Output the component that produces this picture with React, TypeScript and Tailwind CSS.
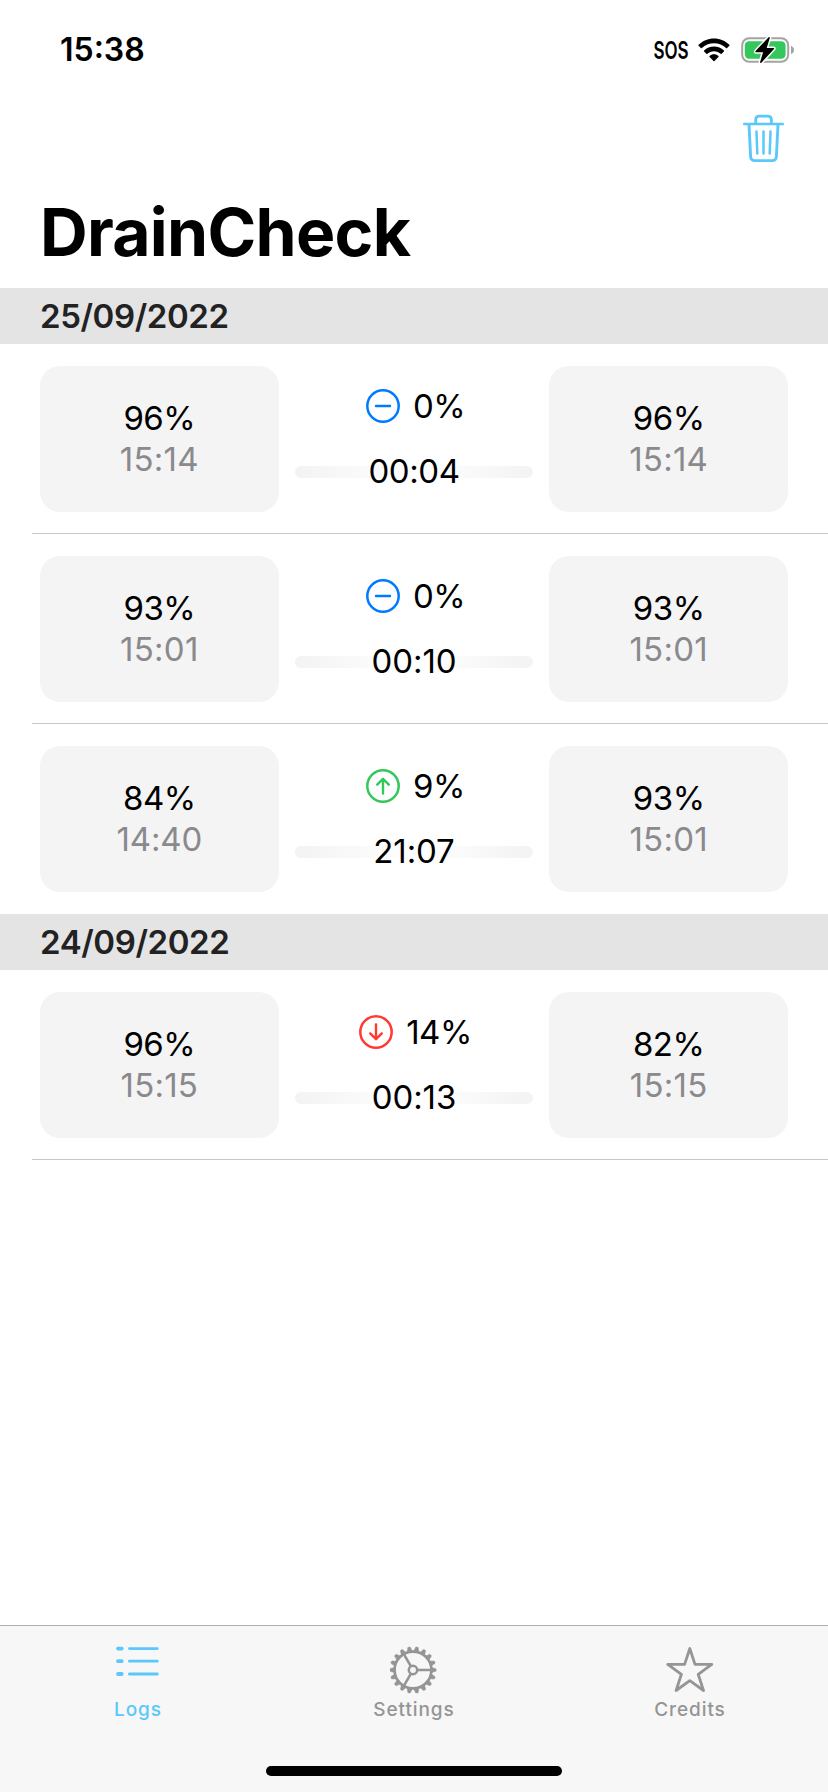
import type { ReactNode } from "react";

type Trend = "same" | "up" | "down";

interface Log {
  from: [string, string];
  to: [string, string];
  trend: Trend;
  delta: string;
  duration: string;
}

const sections: { date: string; logs: Log[] }[] = [
  {
    date: "25/09/2022",
    logs: [
      { from: ["96%", "15:14"], to: ["96%", "15:14"], trend: "same", delta: "0%", duration: "00:04" },
      { from: ["93%", "15:01"], to: ["93%", "15:01"], trend: "same", delta: "0%", duration: "00:10" },
      { from: ["84%", "14:40"], to: ["93%", "15:01"], trend: "up", delta: "9%", duration: "21:07" },
    ],
  },
  {
    date: "24/09/2022",
    logs: [{ from: ["96%", "15:15"], to: ["82%", "15:15"], trend: "down", delta: "14%", duration: "00:13" }],
  },
];

const trendColor: Record<Trend, string> = {
  same: "text-[#007aff]",
  up: "text-[#34c759]",
  down: "text-[#ff3b30]",
};

const trendPath: Record<Trend, string> = {
  same: "M10 17H24",
  up: "M17 24.5V10.2M11.2 15.6L17 9.8L22.8 15.6",
  down: "M17 9.5V23.8M11.2 18.4L17 24.2L22.8 18.4",
};

function TrendIcon({ trend }: { trend: Trend }) {
  return (
    <svg viewBox="0 0 34 34" className={`size-[34px] ${trendColor[trend]}`} fill="none" stroke="currentColor" strokeLinecap="round" strokeLinejoin="round">
      <circle cx="17" cy="17" r="15.7" strokeWidth="2.5" />
      <path d={trendPath[trend]} strokeWidth="2.4" />
    </svg>
  );
}

// The narrow "1" needs looser tracking so that times keep an even width.
const timeTracking = ["tracking-[-0.45px]", "tracking-[-0.1px]", "tracking-[0.25px]"];

function Time({ value, muted = false }: { value: string; muted?: boolean }) {
  const ones = Math.min(value.split("1").length - 1, 2);
  return <span className={`${timeTracking[ones]} ${muted ? "text-[#8a8a8e]" : ""}`}>{value}</span>;
}

function Reading({ value }: { value: [string, string] }) {
  return (
    <div className="flex h-[146px] flex-col items-center justify-center rounded-[20px] bg-[#f4f4f4] leading-[41px]">
      <span>{value[0]}</span>
      <Time value={value[1]} muted />
    </div>
  );
}

function LogRow({ log, divider }: { log: Log; divider: boolean }) {
  return (
    <div className="flex h-[190px] flex-col">
      <div className="grid grid-cols-3 gap-4 px-10 pt-[22px] text-[33px] tracking-[-0.5px]">
        <Reading value={log.from} />
        <div className="flex h-[146px] flex-col pt-5">
          <div className="flex h-10 items-center justify-center gap-[13px] pl-[3px]">
            <TrendIcon trend={log.trend} />
            <span className="pt-px">{log.delta}</span>
          </div>
          <div className="mt-10 flex h-3 items-center justify-center rounded-full bg-linear-to-r from-[#f3f3f3] via-white to-[#f3f3f3]">
            <Time value={log.duration} />
          </div>
        </div>
        <Reading value={log.to} />
      </div>
      {divider && <div className="mt-auto ml-8 h-px bg-[#c6c6c8]" />}
    </div>
  );
}

function StatusBar() {
  return (
    <header className="flex h-[100px] items-center justify-between pr-[33px] pl-[60px]">
      <span className="text-[32px] font-semibold">15:38</span>
      <div className="flex items-center">
        <span className="mr-[9px] origin-right scale-x-[0.71] pt-[2px] text-[24px] font-semibold">SOS</span>
        <svg viewBox="0 0 32 24" className="mr-[11px] mb-px h-6 w-8">
          <path d="M16 0.5C22 0.5 27.4 2.9 31.4 6.8C31.7 7.1 31.7 7.5 31.4 7.8L29.1 10.1C28.8 10.4 28.4 10.4 28.1 10.1C24.9 7 20.7 5.2 16 5.2S7.1 7 3.9 10.1C3.6 10.4 3.2 10.4 2.9 10.1L0.6 7.8C0.3 7.5 0.3 7.1 0.6 6.8C4.6 2.9 10 0.5 16 0.5Z" />
          <path d="M16 8.5C19.8 8.5 23.3 10 25.9 12.4C26.2 12.7 26.2 13.1 25.9 13.4L23.6 15.7C23.3 16 22.9 16 22.6 15.7C20.8 14.1 18.5 13.2 16 13.2S11.2 14.1 9.4 15.7C9.1 16 8.7 16 8.4 15.7L6.1 13.4C5.8 13.1 5.8 12.7 6.1 12.4C8.7 10 12.2 8.5 16 8.5Z" />
          <path d="M16 16.3C17.7 16.3 19.3 16.9 20.4 18C20.8 18.3 20.8 18.7 20.4 19.1L16.5 23C16.2 23.3 15.8 23.3 15.5 23L11.6 19.1C11.2 18.7 11.2 18.3 11.6 18C12.7 16.9 14.3 16.3 16 16.3Z" />
        </svg>
        <svg viewBox="0 0 54 28" className="mb-px h-7 w-[54px]">
          <rect x="1.2" y="2.2" width="46" height="23.6" rx="7" fill="none" stroke="#a3a3a3" strokeWidth="2" />
          <rect x="3.8" y="5.2" width="40.8" height="17.6" rx="4.2" fill="#34c759" />
          <path d="M50 9.8C51.8 10.5 53 12.1 53 14S51.8 17.5 50 18.2Z" fill="#a3a3a3" />
          <path d="M27.6 1.2L14.6 15.1C14.1 15.7 14.4 16.2 15 16.2H22.1L19.1 26C18.9 26.9 19.7 27.4 20.4 26.7L33 13C33.5 12.4 33.2 11.9 32.6 11.9H25.7L28.8 2C29 1.1 28.2 0.6 27.6 1.2Z" fill="#000" stroke="#fff" strokeWidth="3" paintOrder="stroke" />
        </svg>
      </div>
    </header>
  );
}

function TrashIcon() {
  return (
    <svg viewBox="0 -0.5 42 48" className="h-12 w-[42px]" fill="none" stroke="#5ac8fa" strokeLinecap="round" strokeLinejoin="round">
      <path d="M1.2 9.6H39.8" strokeWidth="2.5" />
      <path d="M12.7 9V5.2C12.7 2.8 14 1.6 16.5 1.6H24.6C27.1 1.6 28.4 2.8 28.4 5.2V9" strokeWidth="2.8" />
      <path d="M6 10L7.6 42C7.8 44.8 9.3 46.1 11.8 46.1H29.2C31.7 46.1 33.2 44.8 33.4 42L35 10" strokeWidth="2.9" />
      <path d="M13.5 17L14.3 39M20.5 17V39M27.5 17L26.7 39" strokeWidth="2.5" />
    </svg>
  );
}

function ListIcon() {
  return (
    <svg viewBox="0 0 48 48" className="size-12" stroke="currentColor" strokeLinecap="round">
      <path d="M4 2.6H7.7M4 15.2H7.7M4 28H7.7" strokeWidth="3.8" />
      <path d="M15.4 2.6H43.3M15.4 15.2H43.3M15.4 28H43.3" strokeWidth="2.8" />
    </svg>
  );
}

const teeth = Array.from({ length: 18 }, (_, i) => i * 20);

function GearIcon() {
  return (
    <svg viewBox="1 0 48 48" className="size-12" fill="none" stroke="currentColor">
      {teeth.map((angle) => (
        <path key={angle} d="M42.6 21.4L47 22.7Q47.7 24 47 25.3L42.6 26.6Z" fill="currentColor" strokeWidth="0.4" transform={`rotate(${angle} 24 24)`} />
      ))}
      <circle cx="24" cy="24" r="18.4" strokeWidth="2.6" />
      <circle cx="24" cy="24" r="4.2" strokeWidth="2.5" />
      <path d="M28.5 24H42.5M21.8 20.1L14.7 7.8M21.8 27.9L14.7 40.2" strokeWidth="2.6" />
    </svg>
  );
}

function StarIcon() {
  return (
    <svg viewBox="0 0 48 48" className="size-12" fill="none" stroke="currentColor" strokeLinejoin="round">
      <path d="M23.8 2.5L29 18.4H45.8L32.2 28.3L37.5 44.5L23.8 34.6L10.1 44.5L15.4 28.3L1.8 18.4H18.6Z" strokeWidth="2.8" />
    </svg>
  );
}

function Tab({ label, icon, active = false }: { label: string; icon: ReactNode; active?: boolean }) {
  return (
    <div className={`flex flex-col items-center pt-5 ${active ? "text-[#5ac8fa]" : "text-[#959595]"}`}>
      {icon}
      <span className="mt-1 text-[19px] leading-6 font-medium tracking-[0.9px]">{label}</span>
    </div>
  );
}

export default function App() {
  return (
    <div className="flex h-[1792px] w-[828px] flex-col overflow-hidden bg-white font-['Inter',sans-serif] text-black">
      <StatusBar />
      <div className="flex h-[88px] justify-end pt-[14px] pr-[43px]">
        <TrashIcon />
      </div>
      <h1 className="h-[100px] pl-10 text-[66px] leading-[88px] font-bold tracking-[-0.7px]">DrainCheck</h1>
      <main className="flex-1">
        {sections.map((section, s) => (
          <section key={section.date}>
            <h2 className="flex h-14 items-center bg-[#e4e4e4] pt-px pl-10 text-[33px] font-semibold tracking-[-0.4px] text-[#222]">{section.date}</h2>
            {section.logs.map((log, i) => (
              <LogRow key={i} log={log} divider={s === sections.length - 1 || i < section.logs.length - 1} />
            ))}
          </section>
        ))}
      </main>
      <nav className="flex h-[167px] flex-col border-t border-[#b0b0b0] bg-[#f7f7f7]">
        <div className="grid grid-cols-3">
          <Tab label="Logs" icon={<ListIcon />} active />
          <Tab label="Settings" icon={<GearIcon />} />
          <Tab label="Credits" icon={<StarIcon />} />
        </div>
        <div className="mx-auto mt-auto mb-4 h-[10px] w-[296px] rounded-full bg-black" />
      </nav>
    </div>
  );
}
